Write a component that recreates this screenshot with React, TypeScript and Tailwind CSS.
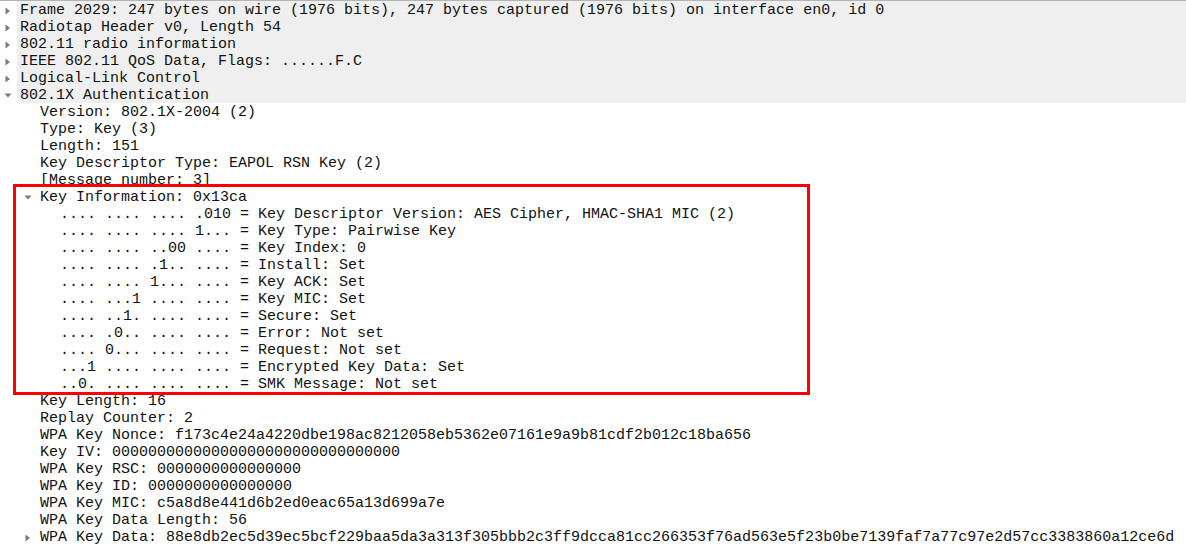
import React from "react"

type Row = {
  text: string
  level: number
  arrow?: "right" | "down"
  top?: boolean
}

const rows: Row[] = [
  { text: "Frame 2029: 247 bytes on wire (1976 bits), 247 bytes captured (1976 bits) on interface en0, id 0", level: 0, arrow: "right", top: true },
  { text: "Radiotap Header v0, Length 54", level: 0, arrow: "right", top: true },
  { text: "802.11 radio information", level: 0, arrow: "right", top: true },
  { text: "IEEE 802.11 QoS Data, Flags: ......F.C", level: 0, arrow: "right", top: true },
  { text: "Logical-Link Control", level: 0, arrow: "right", top: true },
  { text: "802.1X Authentication", level: 0, arrow: "down", top: true },
  { text: "Version: 802.1X-2004 (2)", level: 1 },
  { text: "Type: Key (3)", level: 1 },
  { text: "Length: 151", level: 1 },
  { text: "Key Descriptor Type: EAPOL RSN Key (2)", level: 1 },
  { text: "[Message number: 3]", level: 1 },
  { text: "Key Information: 0x13ca", level: 1, arrow: "down" },
  { text: ".... .... .... .010 = Key Descriptor Version: AES Cipher, HMAC-SHA1 MIC (2)", level: 2 },
  { text: ".... .... .... 1... = Key Type: Pairwise Key", level: 2 },
  { text: ".... .... ..00 .... = Key Index: 0", level: 2 },
  { text: ".... .... .1.. .... = Install: Set", level: 2 },
  { text: ".... .... 1... .... = Key ACK: Set", level: 2 },
  { text: ".... ...1 .... .... = Key MIC: Set", level: 2 },
  { text: ".... ..1. .... .... = Secure: Set", level: 2 },
  { text: ".... .0.. .... .... = Error: Not set", level: 2 },
  { text: ".... 0... .... .... = Request: Not set", level: 2 },
  { text: "...1 .... .... .... = Encrypted Key Data: Set", level: 2 },
  { text: "..0. .... .... .... = SMK Message: Not set", level: 2 },
  { text: "Key Length: 16", level: 1 },
  { text: "Replay Counter: 2", level: 1 },
  { text: "WPA Key Nonce: f173c4e24a4220dbe198ac8212058eb5362e07161e9a9b81cdf2b012c18ba656", level: 1 },
  { text: "Key IV: 00000000000000000000000000000000", level: 1 },
  { text: "WPA Key RSC: 0000000000000000", level: 1 },
  { text: "WPA Key ID: 0000000000000000", level: 1 },
  { text: "WPA Key MIC: c5a8d8e441d6b2ed0eac65a13d699a7e", level: 1 },
  { text: "WPA Key Data Length: 56", level: 1 },
  { text: "WPA Key Data: 88e8db2ec5d39ec5bcf229baa5da3a313f305bbb2c3ff9dcca81cc266353f76ad563e5f23b0be7139faf7a77c97e2d57cc3383860a12ce6d", level: 1, arrow: "right" },
]

const Arrow = ({ dir }: { dir?: "right" | "down" }) => {
  if (!dir) return null
  return dir === "right" ? (
    <svg width="6" height="8" viewBox="0 0 6 8">
      <polygon points="0.5,0.5 5,4 0.5,7.5" fill="#7a7a7a" />
    </svg>
  ) : (
    <svg width="8" height="5" viewBox="0 0 8 5">
      <polygon points="0.5,0.5 7.5,0.5 4,4.5" fill="#7a7a7a" />
    </svg>
  )
}

const indent = ["pl-0", "pl-[20px]", "pl-[40px]"]

export default function App() {
  return (
    <div className="relative w-[1186px] h-[557px] overflow-hidden bg-white border-t border-[#b4b4b4] font-['Liberation_Mono',monospace] text-[15px] leading-[17px] text-[#111]">
      {rows.map((r, i) => (
        <div key={i} className={`flex h-[17px] whitespace-pre ${indent[r.level]}`}>
          <div className="w-[17px] shrink-0 flex items-center justify-center pr-[1px] pt-[2px]">
            <Arrow dir={r.arrow} />
          </div>
          <div className={`flex-1 h-[17px] pl-[3px] pt-[1px] ${r.top ? "bg-[#efefef]" : ""}`}>{r.text}</div>
        </div>
      ))}
      {/* highlight annotation */}
      <div className="absolute left-[13px] top-[183px] w-[797px] h-[211px] border-[3px] border-[#ff0000]" />
    </div>
  )
}
